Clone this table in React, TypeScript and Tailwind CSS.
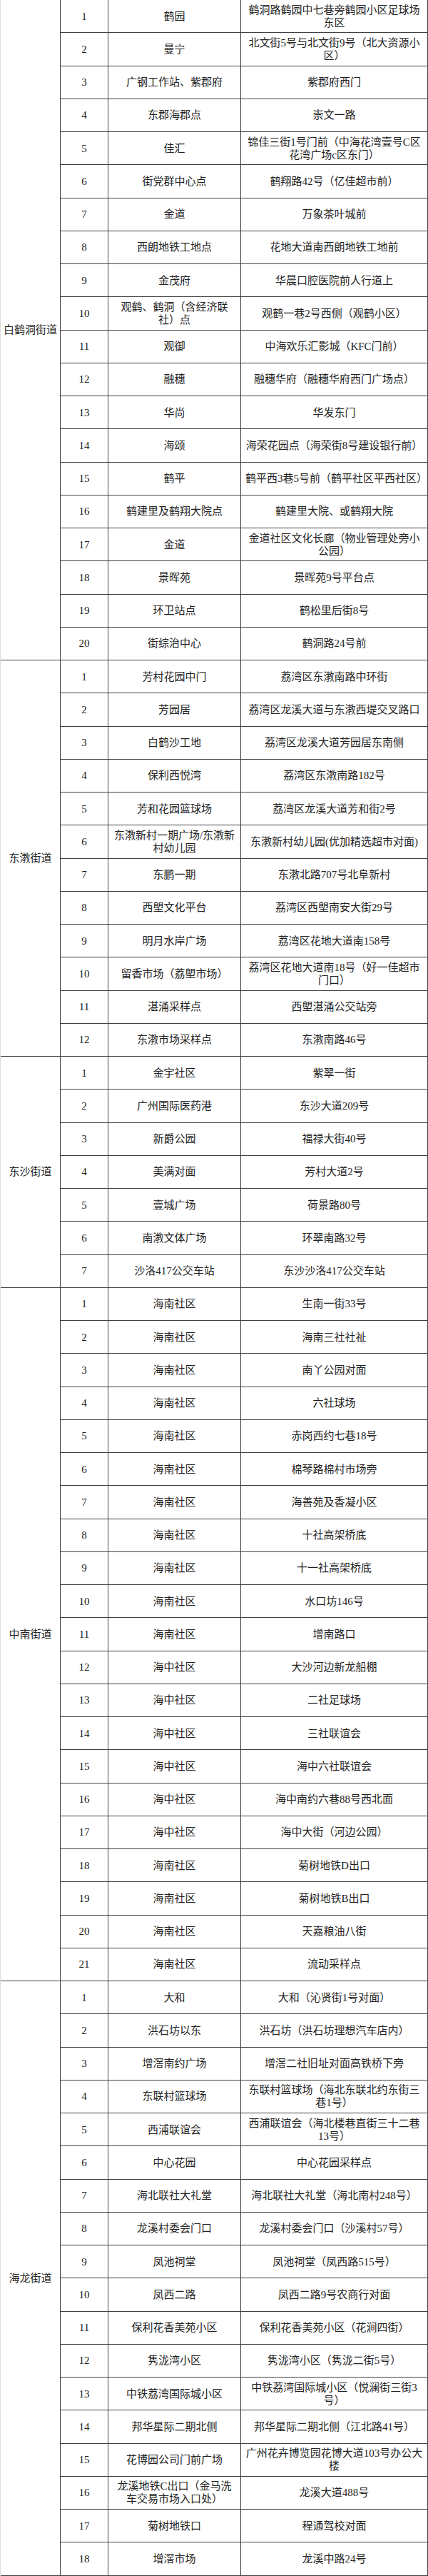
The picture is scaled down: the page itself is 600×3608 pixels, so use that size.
const groups: [string, [string, string][]][] = [
  [
    "白鹤洞街道",
    [
      ["鹤园", "鹤洞路鹤园中七巷旁鹤园小区足球场东区"],
      ["曼宁", "北文街5号与北文街9号（北大资源小区）"],
      ["广钢工作站、紫郡府", "紫郡府西门"],
      ["东郡海郡点", "崇文一路"],
      ["佳汇", "锦佳三街1号门前（中海花湾壹号C区花湾广场c区东门）"],
      ["街党群中心点", "鹤翔路42号（亿佳超市前）"],
      ["金道", "万象茶叶城前"],
      ["西朗地铁工地点", "花地大道南西朗地铁工地前"],
      ["金茂府", "华晨口腔医院前人行道上"],
      ["观鹤、鹤洞（含经济联社）点", "观鹤一巷2号西侧（观鹤小区）"],
      ["观御", "中海欢乐汇影城（KFC门前）"],
      ["融穗", "融穗华府（融穗华府西门广场点）"],
      ["华尚", "华发东门"],
      ["海颂", "海荣花园点（海荣街8号建设银行前）"],
      ["鹤平", "鹤平西3巷5号前（鹤平社区平西社区）"],
      ["鹤建里及鹤翔大院点", "鹤建里大院、或鹤翔大院"],
      ["金道", "金道社区文化长廊（物业管理处旁小公园）"],
      ["景晖苑", "景晖苑9号平台点"],
      ["环卫站点", "鹤松里后街8号"],
      ["街综治中心", "鹤洞路24号前"],
    ],
  ],
  [
    "东漖街道",
    [
      ["芳村花园中门", "荔湾区东漖南路中环街"],
      ["芳园居", "荔湾区龙溪大道与东漖西堤交叉路口"],
      ["白鹤沙工地", "荔湾区龙溪大道芳园居东南侧"],
      ["保利西悦湾", "荔湾区东漖南路182号"],
      ["芳和花园篮球场", "荔湾区龙溪大道芳和街2号"],
      ["东漖新村一期广场/东漖新村幼儿园", "东漖新村幼儿园(优加精选超市对面)"],
      ["东鹏一期", "东漖北路707号北阜新村"],
      ["西塱文化平台", "荔湾区西塱南安大街29号"],
      ["明月水岸广场", "荔湾区花地大道南158号"],
      ["留香市场（荔塱市场）", "荔湾区花地大道南18号（好一佳超市门口）"],
      ["湛涌采样点", "西塱湛涌公交站旁"],
      ["东漖市场采样点", "东漖南路46号"],
    ],
  ],
  [
    "东沙街道",
    [
      ["金宇社区", "紫翠一街"],
      ["广州国际医药港", "东沙大道209号"],
      ["新爵公园", "福禄大街40号"],
      ["美满对面", "芳村大道2号"],
      ["壹城广场", "荷景路80号"],
      ["南漖文体广场", "环翠南路32号"],
      ["沙洛417公交车站", "东沙沙洛417公交车站"],
    ],
  ],
  [
    "中南街道",
    [
      ["海南社区", "生南一街33号"],
      ["海南社区", "海南三社社祉"],
      ["海南社区", "南丫公园对面"],
      ["海南社区", "六社球场"],
      ["海南社区", "赤岗西约七巷18号"],
      ["海南社区", "棉琴路棉村市场旁"],
      ["海南社区", "海善苑及香凝小区"],
      ["海南社区", "十社高架桥底"],
      ["海南社区", "十一社高架桥底"],
      ["海南社区", "水口坊146号"],
      ["海南社区", "增南路口"],
      ["海中社区", "大沙河边新龙船棚"],
      ["海中社区", "二社足球场"],
      ["海中社区", "三社联谊会"],
      ["海中社区", "海中六社联谊会"],
      ["海中社区", "海中南约六巷88号西北面"],
      ["海中社区", "海中大街（河边公园）"],
      ["海南社区", "菊树地铁D出口"],
      ["海南社区", "菊树地铁B出口"],
      ["海南社区", "天嘉粮油八街"],
      ["海南社区", "流动采样点"],
    ],
  ],
  [
    "海龙街道",
    [
      ["大和", "大和（沁贤街1号对面）"],
      ["洪石坊以东", "洪石坊（洪石坊理想汽车店内）"],
      ["增滘南约广场", "增滘二社旧址对面高铁桥下旁"],
      ["东联村篮球场", "东联村篮球场（海北东联北约东街三巷1号）"],
      ["西浦联谊会", "西浦联谊会（海北楼巷直街三十二巷13号）"],
      ["中心花园", "中心花园采样点"],
      ["海北联社大礼堂", "海北联社大礼堂（海北南村248号）"],
      ["龙溪村委会门口", "龙溪村委会门口（沙溪村57号）"],
      ["凤池祠堂", "凤池祠堂（凤西路515号）"],
      ["凤西二路", "凤西二路9号农商行对面"],
      ["保利花香美苑小区", "保利花香美苑小区（花涧四街）"],
      ["隽泷湾小区", "隽泷湾小区（隽泷二街5号）"],
      ["中铁荔湾国际城小区", "中铁荔湾国际城小区（悦澜街三街3号）"],
      ["邦华星际二期北侧", "邦华星际二期北侧（江北路41号）"],
      ["花博园公司门前广场", "广州花卉博览园花博大道103号办公大楼"],
      ["龙溪地铁C出口（金马洗车交易市场入口处）", "龙溪大道488号"],
      ["菊树地铁口", "程通驾校对面"],
      ["增滘市场", "龙溪中路24号"],
    ],
  ],
];

export default function App() {
  return (
    <div
      className="w-[600px] bg-white text-[#222] text-[15px] leading-[18px] border-l border-[#dcdcdc]"
      style={{ fontFamily: '"Liberation Serif", "Noto Sans CJK SC", serif' }}
    >
      {groups.map(([district, rows]) => (
        <div key={district} className="flex">
          {/* District */}
          <div className="w-[83px] shrink-0 flex items-center justify-center border-b border-[#404040]">
            {district}
          </div>

          {/* Rows */}
          <div className="flex-1">
            {rows.map(([name, addr], i) => (
              <div
                key={i}
                className="grid grid-cols-[67px_186px_1fr] h-[46.25px] border-b border-[#404040]"
              >
                <div className="flex items-center justify-center border-l border-[#404040]">
                  {i + 1}
                </div>
                <div className="flex items-center justify-center text-center px-[7px] border-l border-[#404040]">
                  {name}
                </div>
                <div className="flex items-center justify-center text-center px-[6px] border-l border-r border-[#404040]">
                  {addr}
                </div>
              </div>
            ))}
          </div>
        </div>
      ))}
    </div>
  );
}
